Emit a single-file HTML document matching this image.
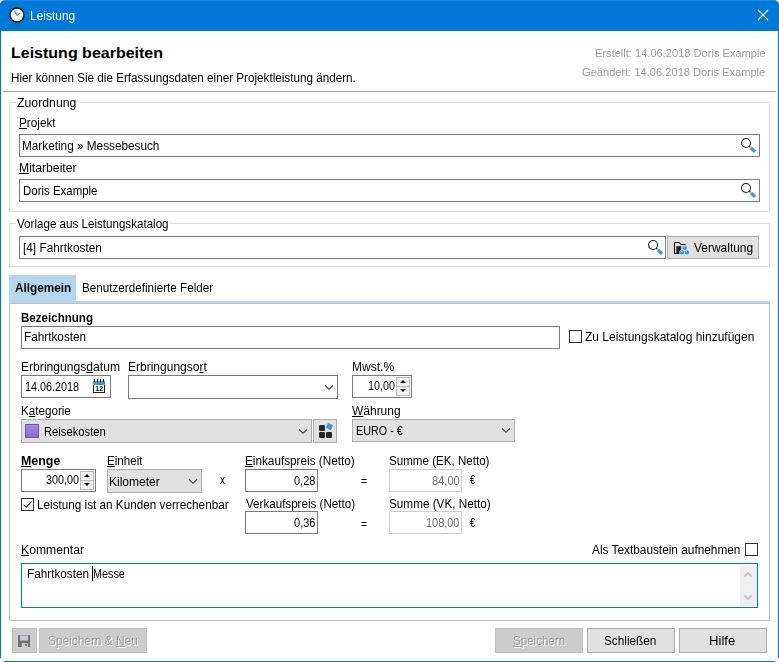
<!DOCTYPE html>
<html lang="de">
<head>
<meta charset="utf-8">
<title>Leistung</title>
<style>
html,body{margin:0;padding:0;}
body{width:779px;height:662px;position:relative;overflow:hidden;background:#fff;font-family:"Liberation Sans",sans-serif;font-size:12px;color:#000;}
.a{position:absolute;box-sizing:border-box;}
.t{position:absolute;white-space:nowrap;line-height:16px;transform-origin:0 0;}
.t u{text-decoration:underline;text-underline-offset:1px;text-decoration-thickness:1px;}
.win{left:0;top:0;width:779px;height:662px;border:1px solid #0078d7;border-radius:5px 5px 4px 4px;}
.title{left:0;top:0;width:779px;height:31px;background:#0078d7;border-radius:5px 5px 0 0;}
.in{background:#fff;border:1px solid #7a7a7a;}
.ind{background:#fff;border:1px solid #cccccc;}
.cb{background:#e1e1e1;border:1px solid #adadad;}
.btn{background:#e1e1e1;border:1px solid #adadad;}
.btnd{background:#cccccc;border:1px solid #bfbfbf;}
.gb{border:1px solid #dcdcdc;}
.chk{width:13px;height:13px;background:#fff;border:1px solid #333;}
.sp{background:#f0f0f0;border:1px solid #b9b9b9;}
svg{position:absolute;overflow:visible;}
</style>
</head>
<body>
<div class="a" style="left:0;top:3px;width:1px;height:655px;background:#0078d7"></div><div class="a" style="left:778px;top:3px;width:1px;height:655px;background:#0078d7"></div><div class="a" style="left:4px;top:661px;width:771px;height:1px;background:#0078d7"></div>
<div class="a title"></div><div class="a" style="left:4px;top:0;width:771px;height:1px;background:#1c86db"></div>
<!-- clock icon -->
<svg style="left:9px;top:7px" width="16" height="16" viewBox="0 0 16 16"><circle cx="8" cy="8" r="7" fill="#fff" stroke="#111" stroke-width="1.3"/><path d="M5.4 3.6 L8 8.4 L11.5 5.8" fill="none" stroke="#3aa7a3" stroke-width="1.2"/></svg>
<!-- close -->
<svg style="left:758px;top:10px" width="10" height="10" viewBox="0 0 10 10"><path d="M0 0 L10 10 M10 0 L0 10" stroke="#fff" stroke-width="1.1" fill="none"/></svg>

<div class="a" style="left:3px;top:91px;width:773px;height:1px;background:#a0a0a0"></div>

<!-- group 1 -->
<div class="a gb" style="left:9px;top:102px;width:761px;height:110px"></div>
<div class="a" style="left:16px;top:102px;width:62px;height:1px;background:#fff"></div>
<div class="a in" style="left:19px;top:134px;width:741px;height:23px"></div>
<div class="a in" style="left:19px;top:179px;width:741px;height:23px"></div>
<!-- group 2 -->
<div class="a gb" style="left:9px;top:223px;width:761px;height:44px"></div>
<div class="a" style="left:16px;top:223px;width:154px;height:1px;background:#fff"></div>
<div class="a in" style="left:19px;top:236px;width:647px;height:23px"></div>
<div class="a btn" style="left:667px;top:236px;width:92px;height:23px"></div>

<!-- magnifiers -->
<svg style="left:740px;top:137px" width="16" height="16" viewBox="0 0 16 16"><circle cx="6" cy="6" r="4.5" fill="#fff" stroke="#222" stroke-width="1.1"/><path d="M9.2 9.2 L10.5 10.3" stroke="#222" stroke-width="1.2"/><path d="M10.9 11 L15.1 14.8" stroke="#3a9bdc" stroke-width="3.2" stroke-linecap="butt"/></svg>
<svg style="left:740px;top:182px" width="16" height="16" viewBox="0 0 16 16"><circle cx="6" cy="6" r="4.5" fill="#fff" stroke="#222" stroke-width="1.1"/><path d="M9.2 9.2 L10.5 10.3" stroke="#222" stroke-width="1.2"/><path d="M10.9 11 L15.1 14.8" stroke="#3a9bdc" stroke-width="3.2" stroke-linecap="butt"/></svg>
<svg style="left:647px;top:239px" width="16" height="16" viewBox="0 0 16 16"><circle cx="6" cy="6" r="4.5" fill="#fff" stroke="#222" stroke-width="1.1"/><path d="M9.2 9.2 L10.5 10.3" stroke="#222" stroke-width="1.2"/><path d="M10.9 11 L15.1 14.8" stroke="#3a9bdc" stroke-width="3.2" stroke-linecap="butt"/></svg>

<!-- Verwaltung icon -->
<svg style="left:673px;top:241px" width="17" height="15" viewBox="0 0 17 15"><path d="M1.5 12.5 V2.2 Q1.5 1.5 2.2 1.5 H6.2 L8 3.5 H12.5" fill="none" stroke="#111" stroke-width="1.1"/><path d="M1.5 12.5 H5" stroke="#111" stroke-width="1.1"/><rect x="3.3" y="5.2" width="5" height="7.8" fill="#222"/><g fill="#3a9bdc" stroke="#e8f3fb" stroke-width="0.5"><path d="M11.7 4.3 l2.4 1.3 v2.7 l-2.4 1.3 l-2.4 -1.3 v-2.7z"/><path d="M9 8.8 l2.4 1.3 v2.7 l-2.4 1.3 l-2.4 -1.3 v-2.7z"/><path d="M13.9 8.8 l2.4 1.3 v2.7 l-2.4 1.3 l-2.4 -1.3 v-2.7z"/></g><path d="M10.5 6.4 l1.3 -0.8 M7.8 10.9 l1.3 -0.8 M12.7 10.9 l1.3 -0.8" stroke="#fff" stroke-width="0.7" opacity="0.85"/></svg>

<!-- tabs -->
<div class="a" style="left:9px;top:275px;width:67px;height:28px;background:#b3d7f0"></div>
<div class="a" style="left:9px;top:301px;width:761px;height:2px;background:#b3d7f0"></div>
<div class="a" style="left:9px;top:303px;width:761px;height:318px;border:1px solid #c1c1c1"></div>

<!-- Bezeichnung -->
<div class="a in" style="left:21px;top:326px;width:539px;height:23px"></div>
<div class="a chk" style="left:569px;top:330px"></div>

<!-- date -->
<div class="a in" style="left:21px;top:375px;width:90px;height:23px"></div>
<svg style="left:93px;top:379px" width="12" height="14" viewBox="0 0 12 14"><rect x="0.5" y="5" width="11" height="8.5" fill="#fff" stroke="#222" stroke-width="1"/><rect x="0" y="2" width="12" height="4" fill="#3a9bdc"/><path d="M1.5 0 V3 M4.5 0 V3 M7.5 0 V3 M10.5 0 V3" stroke="#111" stroke-width="1"/><text x="2.2" y="12.1" font-size="7.5" font-weight="bold" font-family="Liberation Sans, sans-serif" fill="#111" textLength="8" lengthAdjust="spacingAndGlyphs">12</text></svg>
<!-- ort combo -->
<div class="a in" style="left:128px;top:375px;width:210px;height:24px"></div>
<svg style="left:325px;top:385px" width="8" height="5" viewBox="0 0 8 5"><path d="M0 0.3 L4 4.3 L8 0.3" fill="none" stroke="#3a3a3a" stroke-width="1.15"/></svg>
<!-- mwst spin -->
<div class="a in" style="left:352px;top:375px;width:60px;height:23px"></div>
<div class="a sp" style="left:396px;top:377px;width:14px;height:10px"></div>
<div class="a sp" style="left:396px;top:386px;width:14px;height:10px"></div>
<svg style="left:400px;top:380px" width="6" height="3" viewBox="0 0 6 3"><path d="M0 3 L3 0 L6 3z" fill="#000"/></svg>
<svg style="left:400px;top:389px" width="6" height="3" viewBox="0 0 6 3"><path d="M0 0 L3 3 L6 0z" fill="#000"/></svg>

<!-- Kategorie combo -->
<div class="a cb" style="left:21px;top:419px;width:291px;height:24px"></div>
<div class="a" style="left:25px;top:424px;width:14px;height:14px;background:linear-gradient(#a08ce0,#8a6ccf);border:1px solid #7050c4"></div>
<svg style="left:299px;top:429px" width="8" height="5" viewBox="0 0 8 5"><path d="M0 0.3 L4 4.3 L8 0.3" fill="none" stroke="#3a3a3a" stroke-width="1.15"/></svg>
<div class="a btn" style="left:313px;top:419px;width:24px;height:24px"></div>
<svg style="left:319px;top:422px" width="14" height="16" viewBox="0 0 14 16"><rect x="0" y="3" width="6" height="6" rx="1.3" fill="#262626"/><rect x="0" y="10" width="6" height="6" rx="1.3" fill="#262626"/><rect x="7" y="10" width="6" height="6" rx="1.3" fill="#262626"/><rect x="7.6" y="1.7" width="5.6" height="5.6" fill="#3a9bdc" transform="rotate(25 10.4 4.5)"/></svg>
<!-- Währung combo -->
<div class="a cb" style="left:352px;top:419px;width:163px;height:23px"></div>
<svg style="left:502px;top:428px" width="8" height="5" viewBox="0 0 8 5"><path d="M0 0.3 L4 4.3 L8 0.3" fill="none" stroke="#3a3a3a" stroke-width="1.15"/></svg>

<!-- Menge spin -->
<div class="a in" style="left:21px;top:469px;width:75px;height:23px"></div>
<div class="a sp" style="left:80px;top:471px;width:14px;height:10px"></div>
<div class="a sp" style="left:80px;top:480px;width:14px;height:10px"></div>
<svg style="left:84px;top:474px" width="6" height="3" viewBox="0 0 6 3"><path d="M0 3 L3 0 L6 3z" fill="#000"/></svg>
<svg style="left:84px;top:483px" width="6" height="3" viewBox="0 0 6 3"><path d="M0 0 L3 3 L6 0z" fill="#000"/></svg>
<!-- Einheit combo -->
<div class="a cb" style="left:107px;top:469px;width:95px;height:24px"></div>
<svg style="left:189px;top:479px" width="8" height="5" viewBox="0 0 8 5"><path d="M0 0.3 L4 4.3 L8 0.3" fill="none" stroke="#3a3a3a" stroke-width="1.15"/></svg>
<!-- prices -->
<div class="a in" style="left:245px;top:469px;width:73px;height:23px"></div>
<div class="a ind" style="left:389px;top:469px;width:73px;height:23px"></div>
<div class="a in" style="left:245px;top:511px;width:73px;height:23px"></div>
<div class="a ind" style="left:389px;top:511px;width:73px;height:23px"></div>
<!-- checkbox checked -->
<div class="a chk" style="left:21px;top:498px"></div>
<svg style="left:21px;top:498px" width="13" height="13" viewBox="0 0 13 13"><path d="M2.6 6.6 L5.2 9.2 L10.8 3.4" fill="none" stroke="#333" stroke-width="1.1"/></svg>

<!-- Kommentar -->
<div class="a chk" style="left:745px;top:543px"></div>
<div class="a" style="left:21px;top:563px;width:737px;height:45px;border:1px solid #0078d7;background:#fff"></div>
<div class="a" style="left:740px;top:565px;width:17px;height:41px;background:#f0f0f0"></div>
<svg style="left:744px;top:572px" width="8" height="5" viewBox="0 0 8 5"><path d="M0.3 4.6 L4 0.9 L7.7 4.6" fill="none" stroke="#bdbdbd" stroke-width="1.6"/></svg>
<svg style="left:744px;top:595px" width="8" height="5" viewBox="0 0 8 5"><path d="M0.3 0.4 L4 4.1 L7.7 0.4" fill="none" stroke="#bdbdbd" stroke-width="1.6"/></svg>
<div class="a" style="left:92px;top:566px;width:1px;height:15px;background:#000"></div>

<!-- bottom buttons -->
<div class="a btnd" style="left:12px;top:628px;width:25px;height:25px"></div>
<svg style="left:18px;top:635px" width="12" height="12" viewBox="0 0 12 12"><rect x="0" y="0" width="12" height="12" fill="#707070"/><rect x="2.1" y="0" width="8" height="5.6" fill="#cdcdcd"/><rect x="2.6" y="0.1" width="7" height="1" fill="#6fb0e0"/><rect x="3.8" y="8.1" width="6.1" height="3.9" fill="#cccccc"/><rect x="7.2" y="8.7" width="1.6" height="2.4" fill="#707070"/></svg>
<div class="a btnd" style="left:39px;top:628px;width:108px;height:25px"></div>
<div class="a btnd" style="left:495px;top:628px;width:88px;height:25px"></div>
<div class="a btn" style="left:587px;top:628px;width:88px;height:25px"></div>
<div class="a btn" style="left:679px;top:628px;width:88px;height:25px"></div>

<span class="t" style="left:30.01px;top:8.00px;color:#fff;transform:scaleX(0.9964);">Leistung</span>
<span class="t" style="left:10.76px;top:45.00px;font-size:15.1px;font-weight:bold;transform:scaleX(1.0602) rotate(0.05deg);">Leistung bearbeiten</span>
<span class="t" style="left:11.01px;top:70.00px;transform:scaleX(0.9733);">Hier können Sie die Erfassungsdaten einer Projektleistung ändern.</span>
<span class="t" style="left:594.91px;top:45.00px;font-size:10.67px;color:#9a9a9a;transform:scaleX(1.0401);">Erstellt: 14.06.2018 Doris Example</span>
<span class="t" style="left:582.38px;top:64.00px;font-size:10.67px;color:#9a9a9a;transform:scaleX(1.0415);">Geändert: 14.06.2018 Doris Example</span>
<span class="t" style="left:17.12px;top:95.00px;transform:scaleX(1.0226);">Zuordnung</span>
<span class="t" style="left:18.59px;top:115.00px;transform:scaleX(0.9793);"><u>P</u>rojekt</span>
<span class="t" style="left:22.32px;top:138.00px;transform:scaleX(0.9811);">Marketing » Messebesuch</span>
<span class="t" style="left:18.81px;top:160.00px;transform:scaleX(1.0157);"><u>M</u>itarbeiter</span>
<span class="t" style="left:23.33px;top:183.00px;transform:scaleX(0.9542);">Doris Example</span>
<span class="t" style="left:16.95px;top:216.00px;transform:scaleX(0.9667);">Vorlage aus Leistungskatalog</span>
<span class="t" style="left:23.25px;top:240.00px;transform:scaleX(0.9859);">[4] Fahrtkosten</span>
<span class="t" style="left:694.00px;top:240.00px;transform:scaleX(0.9966);">Verwaltung</span>
<span class="t" style="left:14.53px;top:280.00px;font-weight:bold;transform:scaleX(0.9815);">Allgemein</span>
<span class="t" style="left:81.84px;top:280.00px;transform:scaleX(0.9730);">Benutzerdefinierte Felder</span>
<span class="t" style="left:21.47px;top:310.00px;font-weight:bold;transform:scaleX(0.9640);">Bezeichnung</span>
<span class="t" style="left:23.79px;top:329.00px;transform:scaleX(0.9812);">Fahrtkosten</span>
<span class="t" style="left:585.39px;top:329.00px;transform:scaleX(0.9995);">Zu Leistungskatalog hinzufügen</span>
<span class="t" style="left:20.95px;top:359.00px;transform:scaleX(1.0094);">Erbringungs<u>d</u>atum</span>
<span class="t" style="left:128.12px;top:359.00px;transform:scaleX(1.0010);">Erbringungso<u>r</u>t</span>
<span class="t" style="left:352.00px;top:359.00px;transform:scaleX(1.0026);">Mwst.%</span>
<span class="t" style="left:25.00px;top:379.00px;transform:scaleX(0.9013);">14.06.2018</span>
<span class="t" style="left:368.26px;top:378.00px;transform:scaleX(0.8938);">10,00</span>
<span class="t" style="left:21.29px;top:403.00px;transform:scaleX(0.9690);">K<u>a</u>tegorie</span>
<span class="t" style="left:352.11px;top:403.00px;transform:scaleX(0.9980);"><u>W</u>ährung</span>
<span class="t" style="left:43.85px;top:424.00px;transform:scaleX(0.9346);">Reisekosten</span>
<span class="t" style="left:356.22px;top:423.00px;transform:scaleX(0.8982);">EURO - €</span>
<span class="t" style="left:21.36px;top:453.00px;font-weight:bold;transform:scaleX(1.0362);"><u>M</u>enge</span>
<span class="t" style="left:107.09px;top:453.00px;transform:scaleX(0.9667);"><u>E</u>inheit</span>
<span class="t" style="left:245.02px;top:453.00px;transform:scaleX(0.9793);"><u>E</u>inkaufspreis (Netto)</span>
<span class="t" style="left:389.16px;top:453.00px;transform:scaleX(0.9658);">Summe (EK, Netto)</span>
<span class="t" style="left:46.37px;top:472.00px;transform:scaleX(0.8989);">300,00</span>
<span class="t" style="left:109.24px;top:474.00px;transform:scaleX(1.0022);">Kilometer</span>
<span class="t" style="left:220.00px;top:472.00px;transform:scaleX(0.8333);">x</span>
<span class="t" style="left:293.99px;top:473.00px;transform:scaleX(0.9121);">0,28</span>
<span class="t" style="left:360.80px;top:473.00px;transform:scaleX(0.8571);">=</span>
<span class="t" style="left:432.24px;top:473.00px;color:#6d6d6d;transform:scaleX(0.9236);">84,00</span>
<span class="t" style="left:469.76px;top:472.00px;transform:scaleX(0.7571);">€</span>
<span class="t" style="left:37.15px;top:497.00px;transform:scaleX(0.9769);">Leistung ist an Kunden verrechenbar</span>
<span class="t" style="left:245.50px;top:496.00px;transform:scaleX(0.9670);">Verkaufspreis (Netto)</span>
<span class="t" style="left:389.30px;top:496.00px;transform:scaleX(0.9781);">Summe (VK, Netto)</span>
<span class="t" style="left:293.94px;top:515.00px;transform:scaleX(0.9214);">0,36</span>
<span class="t" style="left:360.80px;top:516.00px;transform:scaleX(0.8571);">=</span>
<span class="t" style="left:426.06px;top:515.00px;color:#6d6d6d;transform:scaleX(0.9093);">108,00</span>
<span class="t" style="left:469.76px;top:515.00px;transform:scaleX(0.7571);">€</span>
<span class="t" style="left:20.84px;top:542.00px;transform:scaleX(1.0160);"><u>K</u>ommentar</span>
<span class="t" style="left:592.25px;top:542.00px;transform:scaleX(0.9861);">Als Textbaustein aufnehmen</span>
<span class="t" style="left:26.98px;top:566.00px;transform:scaleX(0.9801);">Fahrtkosten </span>
<span class="t" style="left:92.71px;top:566.00px;transform:scaleX(0.9015);">Messe</span>
<span class="t" style="left:48.46px;top:633.00px;color:#9d9d9d;transform:scaleX(0.9893);text-shadow:1px 1px 0 #fff;">Speichern &amp; <u>N</u>eu</span>
<span class="t" style="left:513.30px;top:633.00px;color:#9d9d9d;transform:scaleX(0.9632);text-shadow:1px 1px 0 #fff;"><u>S</u>peichern</span>
<span class="t" style="left:604.27px;top:633.00px;transform:scaleX(0.9825);">Schließen</span>
<span class="t" style="left:709.49px;top:633.00px;transform:scaleX(1.0945);">Hilfe</span>
</body>
</html>
